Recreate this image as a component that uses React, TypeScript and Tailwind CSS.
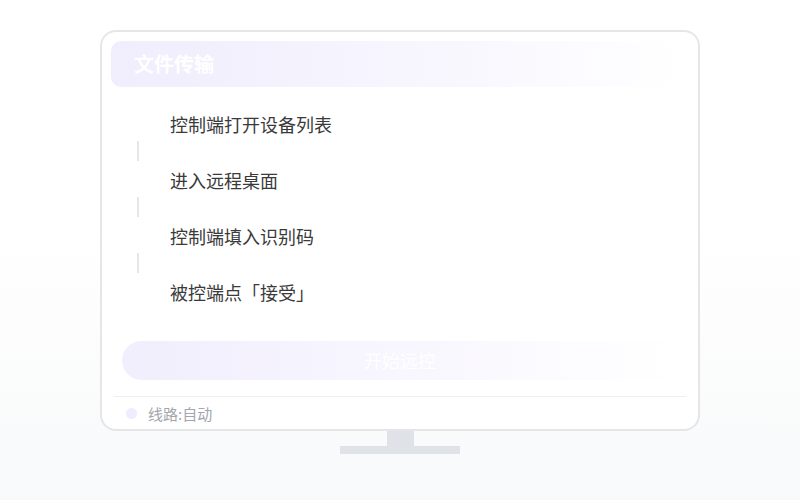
import React from "react";

const steps = ["控制端打开设备列表", "进入远程桌面", "控制端填入识别码", "被控端点「接受」"];

export default function App() {
  return (
    <div
      className="w-[800px] h-[500px] overflow-hidden bg-gradient-to-b from-white from-[45%] to-[#f8f9fa] pt-[30px]"
      style={{ fontFamily: '"Noto Sans CJK SC", "Noto Sans", sans-serif' }}
    >
      <div className="mx-auto w-[600px] flex flex-col items-center">
        <div className="w-[600px] h-[401px] rounded-[16px] border-2 border-[#e4e6ea] bg-white px-[9px] pt-[9px] flex flex-col">
          <div className="h-[46px] rounded-[10px] bg-gradient-to-r from-[#f0edfd] via-[#f7f5fe] to-white flex items-center pl-[23px]">
            <span className="text-[20px] font-bold text-white leading-none">文件传输</span>
          </div>
          <div className="flex flex-col pl-[49px] pt-[25px]">
            {steps.map((s, i) => (
              <div key={s} className="flex flex-col">
                <div className="h-[24px] flex items-center pl-[10px] text-[18px] text-[#3a3a3a] leading-none">{s}</div>
                {i < steps.length - 1 && (
                  <div className="ml-[-23px] mt-[5px] mb-[7px] w-[2px] h-[20px] bg-[#e6e7eb]" />
                )}
              </div>
            ))}
          </div>
          <div className="mt-[37px] mx-[11px] h-[40px] rounded-full bg-gradient-to-r from-[#f1eefd] via-[#f8f6fe] to-white flex items-center justify-center">
            <span className="text-[18px] text-white leading-none">开始远控</span>
          </div>
          <div className="mt-[16px] mx-[3px] h-px bg-[#eceef1]" />
          <div className="flex items-center h-[32px] pl-[15px] gap-[11px]">
            <div className="w-[11px] h-[11px] rounded-full bg-[#efecfd]" />
            <span className="text-[15px] text-[#a3a6ad] leading-none">线路:自动</span>
          </div>
        </div>
        <div className="w-[27px] h-[15px] bg-[#dfe3e7]" />
        <div className="w-[120px] h-[8px] bg-[#dfe3e7]" />
      </div>
    </div>
  );
}
